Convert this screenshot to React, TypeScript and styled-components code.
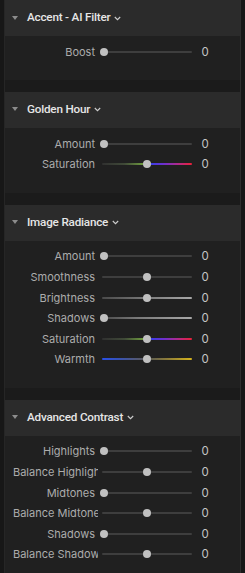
import React from 'react'
import styled, { createGlobalStyle, css } from 'styled-components'

const GlobalStyle = createGlobalStyle`
  html, body {
    margin: 0;
    padding: 0;
    background: #171717;
    font-family: Inter, "Liberation Sans", Arial, sans-serif;
    -webkit-font-smoothing: antialiased;
  }
`

type TrackKind = 'plain' | 'brightness' | 'shadows' | 'saturation' | 'warmth'

interface SliderRow {
  label: string
  pos: number
  track?: TrackKind
}

interface Section {
  title: string
  rows: SliderRow[]
}

const sections: Section[] = [
  { title: 'Accent - AI Filter', rows: [{ label: 'Boost', pos: 0 }] },
  {
    title: 'Golden Hour',
    rows: [
      { label: 'Amount', pos: 0 },
      { label: 'Saturation', pos: 0.5, track: 'saturation' },
    ],
  },
  {
    title: 'Image Radiance',
    rows: [
      { label: 'Amount', pos: 0 },
      { label: 'Smoothness', pos: 0.5 },
      { label: 'Brightness', pos: 0.5, track: 'brightness' },
      { label: 'Shadows', pos: 0, track: 'shadows' },
      { label: 'Saturation', pos: 0.5, track: 'saturation' },
      { label: 'Warmth', pos: 0.5, track: 'warmth' },
    ],
  },
  {
    title: 'Advanced Contrast',
    rows: [
      { label: 'Highlights', pos: 0 },
      { label: 'Balance Highlights', pos: 0.5 },
      { label: 'Midtones', pos: 0 },
      { label: 'Balance Midtones', pos: 0.5 },
      { label: 'Shadows', pos: 0 },
      { label: 'Balance Shadows', pos: 0.5 },
    ],
  },
]

const trackBackgrounds: Record<TrackKind, ReturnType<typeof css>> = {
  plain: css`
    background: #3e3e3e;
  `,
  brightness: css`
    background: linear-gradient(to right, #4a4a4a 0%, #7a7a7a 50%, #a8a8a8 100%);
  `,
  shadows: css`
    background: linear-gradient(to right, #4a4a4a 0%, #7a7a7a 40%, #a8a8a8 100%);
  `,
  saturation: css`
    background: linear-gradient(
      to right,
      #303030 0%,
      #404a38 25%,
      #6e9c3e 46%,
      #3a3ee6 54%,
      #6a30d0 68%,
      #b02a8c 84%,
      #ec2038 100%
    );
  `,
  warmth: css`
    background: linear-gradient(
      to right,
      #2a50e8 0%,
      #3652b8 18%,
      #56586a 42%,
      #5a5a52 52%,
      #8c7c3a 72%,
      #d6b41c 100%
    );
  `,
}

const Page = styled.div`
  width: 245px;
  height: 573px;
  overflow: hidden;
  background: #171717;
`

const Panel = styled.div`
  margin-left: 4px;
  width: 235px;
  border-left: 1px solid #262626;
  border-right: 1px solid #2e2e2e;
  background: #1b1b1b;
  display: flex;
  flex-direction: column;
  gap: 12px;
  min-height: 573px;
`

const Group = styled.section`
  display: flex;
  flex-direction: column;
`

const Header = styled.div`
  height: 36px;
  box-sizing: border-box;
  padding: 0 0 2px 7px;
  display: flex;
  align-items: center;
  background: #2b2b2b;
`

const Caret = styled.span`
  width: 0;
  height: 0;
  border-left: 3px solid transparent;
  border-right: 3px solid transparent;
  border-top: 4px solid #8c8c8c;
  margin-top: 1px;
`

const Title = styled.span`
  margin-left: 9px;
  font-family: Roboto, "Liberation Sans", Arial, sans-serif;
  font-size: 11.7px;
  font-weight: 500;
  letter-spacing: -0.2px;
  color: #e6e6e6;
`

const Chevron = styled.svg`
  margin-left: 4px;
  margin-top: 2px;
`

const Body = styled.div`
  background: #202020;
  padding: 5.5px 0 17.9px 8px;
  display: flex;
  flex-direction: column;
`

const Row = styled.div`
  height: 20.6px;
  display: flex;
  align-items: center;
`

const Label = styled.span`
  width: 85px;
  box-sizing: border-box;
  padding-right: 3px;
  text-align: right;
  white-space: nowrap;
  overflow: hidden;
  font-size: 11px;
  color: #acacac;
`

const Slider = styled.div`
  position: relative;
  margin-left: 3.5px;
  width: 90px;
  height: 8px;
  display: flex;
  align-items: center;
`

const Track = styled.div<{ $kind: TrackKind }>`
  width: 100%;
  height: 2px;
  border-radius: 1px;
  ${({ $kind }) => trackBackgrounds[$kind]}
`

const Knob = styled.div`
  position: absolute;
  top: 0;
  width: 8px;
  height: 8px;
  margin-left: -4px;
  border-radius: 50%;
  background: #c0c0c0;
`

const Value = styled.span`
  margin-left: 10px;
  font-size: 11.5px;
  color: #c4c4c4;
`

const SliderLine = ({ row }: { row: SliderRow }) => (
  <Row>
    <Label>{row.label}</Label>
    <Slider>
      <Track $kind={row.track || 'plain'} />
      <Knob style={{ left: `${2.5 + row.pos * 85}px` }} />
    </Slider>
    <Value>0</Value>
  </Row>
)

const App = () => (
  <Page>
    <GlobalStyle />
    <Panel>
      {sections.map(section => (
        <Group key={section.title}>
          <Header>
            <Caret />
            <Title>{section.title}</Title>
            <Chevron width="7" height="5" viewBox="0 0 7 5">
              <path d="M0.8 1 L3.5 3.7 L6.2 1" fill="none" stroke="#cfcfcf" strokeWidth="1.1" />
            </Chevron>
          </Header>
          <Body>
            {section.rows.map(row => (
              <SliderLine key={row.label} row={row} />
            ))}
          </Body>
        </Group>
      ))}
    </Panel>
  </Page>
)

export default App
